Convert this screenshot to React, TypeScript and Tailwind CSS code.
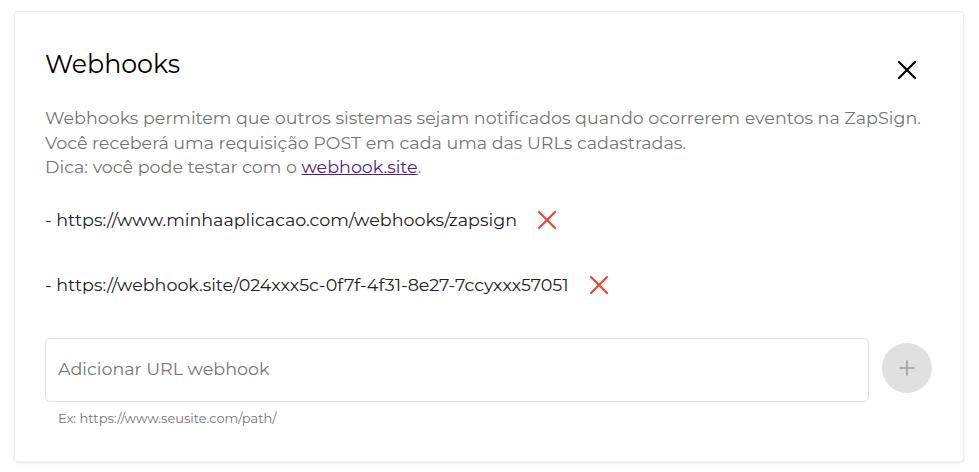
import { X, Plus } from 'lucide-react'

const urls = [
  'https://www.minhaaplicacao.com/webhooks/zapsign',
  'https://webhook.site/024xxx5c-0f7f-4f31-8e27-7ccyxxx57051',
]

export default function App() {
  return (
    <div className="min-h-screen bg-white pt-[11px] pl-[14px] font-['Montserrat','DejaVu_Sans',sans-serif]">
      <div className="w-[950px] h-[451px] rounded-[4px] border border-[#ededed] bg-white pl-[30px] pr-[31px] pt-[36px] shadow-[0_1px_3px_rgba(0,0,0,0.10)]">
        <div className="flex h-[32px] items-center justify-between">
          <h2 className="text-[25.3px] leading-[32px] text-black">Webhooks</h2>
          <button className="mr-[9px] h-[32px] translate-y-[6px] text-black">
            <X className="w-[32px] h-[32px]" strokeWidth={1.6} />
          </button>
        </div>

        <p className="mt-[26px] text-[17.5px] leading-[24.5px] text-[#757575]">
          Webhooks permitem que outros sistemas sejam notificados quando ocorrerem eventos na ZapSign.
          <br />
          Você receberá uma requisição POST em cada uma das URLs cadastradas.
          <br />
          Dica: você pode testar com o{' '}
          <a href="#" className="underline text-[#551a8b]">webhook.site</a>.
        </p>

        <div className="mt-[28px] flex flex-col gap-[41px]">
          {urls.map((u) => (
            <div key={u} className="flex items-center h-[24px] text-[17.5px] leading-[24px] text-[#212121]">
              <span>- {u}</span>
              <button className="ml-[14px] h-[32px] text-[#f44336]">
                <X className="w-[32px] h-[32px]" strokeWidth={1.6} />
              </button>
            </div>
          ))}
        </div>

        <div className="mt-[41px] flex items-start gap-[13px]">
          <div className="flex-1">
            <div className="h-[64px] rounded-[5px] border border-[#e0e0e0] flex items-center px-[12px]">
              <span className="text-[17.5px] text-[#757575]">Adicionar URL webhook</span>
            </div>
            <div className="mt-[8px] pl-[13px] text-[13px] leading-[16px] text-[#757575]">
              Ex: https://www.seusite.com/path/
            </div>
          </div>
          <button className="mt-[5px] w-[50px] h-[50px] rounded-full bg-[#e0e0e0] flex items-center justify-center text-[#9e9e9e]">
            <Plus className="w-[24px] h-[24px]" strokeWidth={1.5} />
          </button>
        </div>
      </div>
    </div>
  )
}
